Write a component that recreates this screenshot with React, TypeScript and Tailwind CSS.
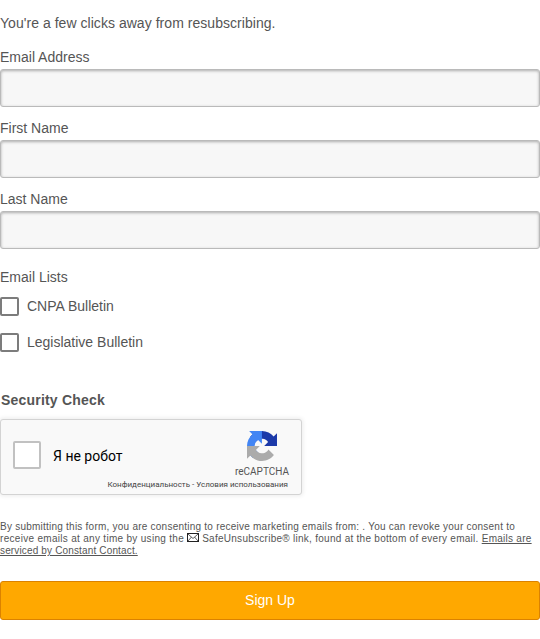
function Field({ label, id }: { label: string; id: string }) {
  return (
    <div className="mb-[13px]">
      <label htmlFor={id} className="block h-5 leading-[17px]">{label}</label>
      <input
        id={id}
        className="block h-[38px] w-full rounded-[3px] border border-[#bababa] bg-[#f7f7f7] px-2 shadow-[inset_0_1px_3px_rgba(0,0,0,0.3)] outline-none"
      />
    </div>
  );
}

function Check({ label }: { label: string }) {
  return (
    <label className="flex h-9 items-start">
      <span className="h-[19px] w-[19px] shrink-0 rounded-[2px] border-2 border-[#7c7c7c] bg-white" />
      <span className="ml-2 leading-[19px]">{label}</span>
    </label>
  );
}

function CaptchaLogo() {
  return (
    <svg viewBox="0 0 64 64" className="h-[30px] w-[30px]">
      <path fill="#1c3aa9" d="M64 31.955l-.033-1.37V4.687l-7.16 7.16C50.948 4.674 42.033.093 32.05.093c-10.4 0-19.622 4.96-25.458 12.64l11.736 11.86a15.55 15.55 0 0 1 4.754-5.334c2.05-1.6 4.952-2.906 8.968-2.906.485 0 .86.057 1.135.163 4.976.393 9.288 3.14 11.828 7.124l-8.307 8.307L64 31.953" />
      <path fill="#4285f4" d="M31.862.094l-1.37.033H4.594l7.16 7.16C4.58 13.147 0 22.06 0 32.046c0 10.4 4.96 19.622 12.64 25.458L24.5 45.768a15.55 15.55 0 0 1-5.334-4.754c-1.6-2.05-2.906-4.952-2.906-8.968 0-.485.057-.86.163-1.135.393-4.976 3.14-9.288 7.124-11.828l8.307 8.307L31.86.095" />
      <path fill="#ababab" d="M.001 32.045l.033 1.37v25.898l7.16-7.16c5.86 7.173 14.774 11.754 24.76 11.754 10.4 0 19.622-4.96 25.458-12.64l-11.736-11.86a15.55 15.55 0 0 1-4.754 5.334c-2.05 1.6-4.952 2.906-8.968 2.906-.485 0-.86-.057-1.135-.163-4.976-.393-9.288-3.14-11.828-7.124l8.307-8.307c-10.522.04-22.4.066-27.295-.005" />
    </svg>
  );
}

function Envelope() {
  return (
    <svg viewBox="0 0 12 9" className="inline-block h-[9px] w-3 align-baseline">
      <rect x="0.5" y="0.5" width="11" height="8" fill="#fff" stroke="#222" />
      <path d="M1 1l5 4.500 5-4.500M1 8l3.500-4M11 8L7.500 4" fill="none" stroke="#333" strokeWidth="0.8" />
    </svg>
  );
}

export default function App() {
  return (
    <main className="h-[639px] w-[540px] overflow-hidden bg-white pt-[15px] font-['Liberation_Sans',Arial,sans-serif] text-[14px] text-[#555]">
      <p className="mb-[17px] h-[17px] leading-[17px] tracking-[0.04px]">You're a few clicks away from resubscribing.</p>
      <div>
        <Field label="Email Address" id="email" />
        <Field label="First Name" id="first" />
        <Field label="Last Name" id="last" />
      </div>
      <fieldset className="mt-[20px]">
        <legend className="mb-[11px] h-[17px] leading-[17px]">Email Lists</legend>
        <Check label="CNPA Bulletin" />
        <Check label="Legislative Bulletin" />
      </fieldset>
      <h2 className="mt-[23px] h-[17px] pl-px leading-[17px] font-bold tracking-[0.2px]">Security Check</h2>
      <section className="mt-[10px] flex h-[76px] w-[302px] flex-col rounded-[3px] border border-[#d3d3d3] bg-[#f9f9f9] font-[Roboto,sans-serif] shadow-[0_0_4px_1px_rgba(0,0,0,0.08)]">
        <div className="flex h-[60px] items-start">
          <span className="mt-[21px] ml-3 h-7 w-7 rounded-[2px] border-2 border-[#c1c1c1] bg-white" />
          <span className="mt-[28px] ml-3 leading-[17px] text-black">Я не робот</span>
          <div className="mt-[11px] mr-3 ml-auto flex flex-col items-center">
            <div className="pl-px"><CaptchaLogo /></div>
            <span className="mt-[5px] text-[10px] leading-[12px]">reCAPTCHA</span>
          </div>
        </div>
        <div className="mr-[13px] text-right text-[8px] leading-[10px] text-[#444]">Конфиденциальность - Условия использования</div>
      </section>
      <p className="mt-[26px] h-9 text-[10px] leading-[12px] whitespace-nowrap tracking-[0.27px]">
        <span className="tracking-[0.235px]">By submitting this form, you are consenting to receive marketing emails from: . You can revoke your consent to</span><br />
        <span className="tracking-[0.3px]">receive emails at any time by using the </span><Envelope /> SafeUnsubscribe® link, found at the bottom of every email. <a className="underline">Emails are<br /><span className="tracking-[0.15px]">serviced by Constant Contact.</span></a>
      </p>
      <button className="mt-6 block h-[39px] w-full rounded-[3px] border border-[#db8200] bg-[#ffa800] text-white">Sign Up</button>
    </main>
  );
}
